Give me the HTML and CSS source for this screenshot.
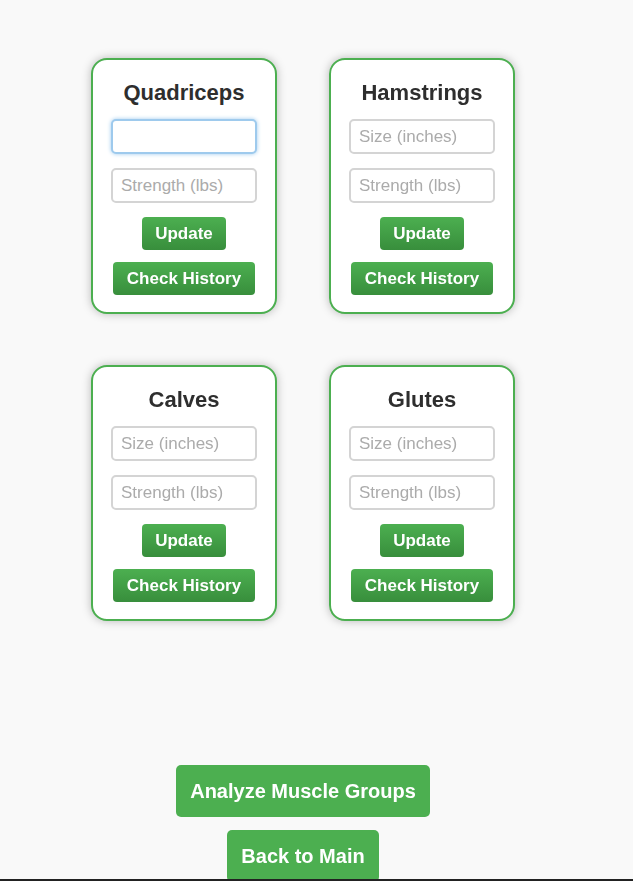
FILE: index.html
```html
<!DOCTYPE html>
<html lang="en">
<head>
<meta charset="utf-8">
<title>Muscle Groups</title>
<link rel="stylesheet" href="styles.css">
</head>
<body>
<div class="page">
  <div class="grid">
    <div class="card">
      <h3 class="card-title">Quadriceps</h3>
      <input class="field focused" type="text" autofocus>
      <input class="field" type="text" placeholder="Strength (lbs)">
      <button class="card-btn">Update</button>
      <button class="card-btn">Check History</button>
    </div>
    <div class="card">
      <h3 class="card-title">Hamstrings</h3>
      <input class="field" type="text" placeholder="Size (inches)">
      <input class="field" type="text" placeholder="Strength (lbs)">
      <button class="card-btn">Update</button>
      <button class="card-btn">Check History</button>
    </div>
    <div class="card">
      <h3 class="card-title">Calves</h3>
      <input class="field" type="text" placeholder="Size (inches)">
      <input class="field" type="text" placeholder="Strength (lbs)">
      <button class="card-btn">Update</button>
      <button class="card-btn">Check History</button>
    </div>
    <div class="card">
      <h3 class="card-title">Glutes</h3>
      <input class="field" type="text" placeholder="Size (inches)">
      <input class="field" type="text" placeholder="Strength (lbs)">
      <button class="card-btn">Update</button>
      <button class="card-btn">Check History</button>
    </div>
  </div>
  <div class="actions">
    <button class="main-btn">Analyze Muscle Groups</button>
    <button class="main-btn">Back to Main</button>
  </div>
</div>
<div class="bottom-bar"></div>
</body>
</html>
```

FILE: styles.css
```css
html, body {
  margin: 0;
  padding: 0;
  background: #f9f9f9;
  font-family: "Liberation Sans", Arial, sans-serif;
  height: 100%;
  overflow: hidden;
}

.page {
  width: 606px;
  display: flex;
  flex-direction: column;
  align-items: center;
  padding-top: 58px;
}

.grid {
  display: grid;
  grid-template-columns: 186px 186px;
  column-gap: 52px;
  row-gap: 51px;
}

.card {
  box-sizing: border-box;
  width: 186px;
  height: 256px;
  background: #ffffff;
  border: 2.5px solid #4caf50;
  border-radius: 16px;
  box-shadow: 0 0 10px rgba(0, 0, 0, 0.26);
  padding: 20px 0 17px;
  display: flex;
  flex-direction: column;
  align-items: center;
}

.card-title {
  margin: 0 0 14px;
  font-size: 22px;
  line-height: 25px;
  font-weight: bold;
  color: #2e2e2e;
}

.field {
  box-sizing: border-box;
  width: 146px;
  height: 35px;
  margin: 0 0 14px;
  padding: 0 8px;
  border: 2px solid #d4d4d4;
  border-radius: 5px;
  background: #ffffff;
  font-family: "Liberation Sans", Arial, sans-serif;
  font-size: 17px;
  color: #333;
  outline: none;
}

.field::placeholder {
  color: #ababab;
}

.field.focused,
.field:focus {
  border-color: #9ecaed;
  box-shadow: 0 0 4px #9ecaed;
}

.card-btn {
  box-sizing: border-box;
  height: 33px;
  padding: 0 13px;
  border: none;
  border-radius: 4px;
  background: linear-gradient(to bottom, #4caf50, #388e3c);
  color: #ffffff;
  font-family: "Liberation Sans", Arial, sans-serif;
  font-size: 17px;
  font-weight: bold;
  line-height: 33px;
  margin: 0 0 12px;
}

.card-btn + .card-btn {
  margin-bottom: 0;
  padding: 0 14px;
}

.actions {
  margin-top: 144px;
  display: flex;
  flex-direction: column;
  align-items: center;
  gap: 13px;
}

.main-btn {
  box-sizing: border-box;
  height: 52px;
  padding: 0 14px;
  border: none;
  border-radius: 5px;
  background: #4caf50;
  color: #ffffff;
  font-family: "Liberation Sans", Arial, sans-serif;
  font-size: 20px;
  font-weight: bold;
  line-height: 52px;
}

.bottom-bar {
  position: fixed;
  left: 0;
  right: 0;
  bottom: 0;
  height: 2px;
  background: #222222;
}
```
